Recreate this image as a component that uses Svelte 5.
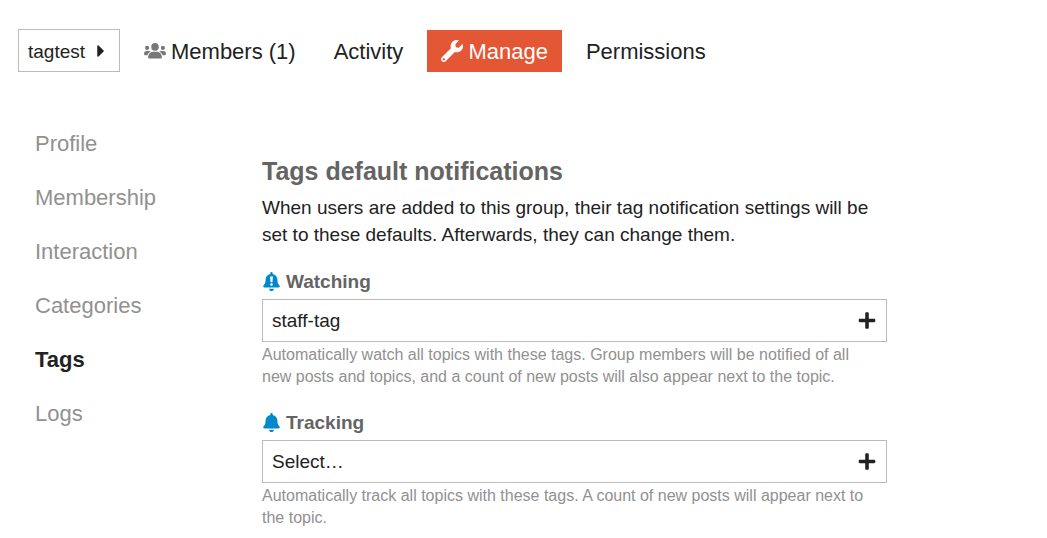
<script>
	let group = 'tagtest';

	const sections = ['Profile', 'Membership', 'Interaction', 'Categories', 'Tags', 'Logs'];
	const activeSection = 'Tags';

	const tabs = [
		{ name: 'Members (1)', icon: 'users' },
		{ name: 'Activity' },
		{ name: 'Manage', icon: 'wrench', active: true },
		{ name: 'Permissions' }
	];

	const levels = [
		{
			id: 'watching',
			label: 'Watching',
			icon: 'bell-exclamation',
			value: 'staff-tag',
			help: 'Automatically watch all topics with these tags. Group members will be notified of all new posts and topics, and a count of new posts will also appear next to the topic.'
		},
		{
			id: 'tracking',
			label: 'Tracking',
			icon: 'bell',
			value: 'Select…',
			help: 'Automatically track all topics with these tags. A count of new posts will appear next to the topic.'
		}
	];

	const bell =
		'M224 512c35.32 0 63.97-28.65 63.97-64H160.03c0 35.35 28.65 64 63.97 64zm215.39-149.71c-19.32-20.76-55.47-51.99-55.47-154.29 0-77.7-54.48-139.9-127.94-155.16V32c0-17.67-14.32-32-31.98-32s-31.98 14.33-31.98 32v20.84C118.56 68.1 64.08 130.3 64.08 208c0 102.3-36.15 133.53-55.47 154.29-6 6.45-8.66 14.16-8.61 21.71.11 16.4 12.98 32 32.1 32h383.8c19.12 0 32-15.6 32.1-32 .05-7.55-2.61-15.27-8.61-21.71z';
</script>

<div class="page">
	<nav class="tabs" aria-label="Group">
		<div class="picker group-picker">
			<select aria-label="Group" bind:value={group}>
				<option>tagtest</option>
			</select>
			<svg class="caret" viewBox="0 0 192 512" aria-hidden="true">
				<path d="M0 384.662V127.338c0-17.818 21.543-26.741 34.142-14.142l128.657 128.657c7.81 7.81 7.81 20.474 0 28.284L34.142 398.804C21.543 411.404 0 402.48 0 384.662z" />
			</svg>
		</div>
		{#each tabs as tab}
			<a href="#{tab.name}" class:active={tab.active}>
				{#if tab.icon === 'users'}
					<svg class="users" viewBox="0 0 64 46" aria-hidden="true">
						<circle cx="32" cy="11" r="11" />
						<circle cx="9" cy="14" r="6" />
						<circle cx="55" cy="14" r="6" />
						<path d="M12 42c0-10 6-17 15-17h10c9 0 15 7 15 17 0 2-1 3-3 3H15c-2 0-3-1-3-3z" />
						<path d="M0 32c0-6 3-9 8-9h6c2 0 4 1 5 2-5 3-8 6-9 10H3c-2 0-3-1-3-3z" />
						<path d="M64 32c0-6-3-9-8-9h-6c-2 0-4 1-5 2 5 3 8 6 9 10h7c2 0 3-1 3-3z" />
					</svg>
				{:else if tab.icon === 'wrench'}
					<svg class="wrench" viewBox="0 0 512 512" aria-hidden="true">
						<path d="M507.73 109.1c-2.24-9.03-13.54-12.09-20.12-5.51l-74.36 74.36-67.88-11.31-11.31-67.88 74.36-74.36c6.62-6.62 3.43-17.9-5.66-20.16-47.38-11.74-99.55.91-136.58 37.93-39.64 39.64-50.55 97.1-34.05 147.2L20 404c-25 25-25 63 0 88s63 25 88 0l214.45-211.95c50.12 16.71 107.47 5.68 147.37-34.22 37.07-37.07 49.7-89.32 37.91-136.73zM64 476c-15 0-27-12-27-27s12-27 27-27 27 12 27 27-12 27-27 27z" />
					</svg>
				{/if}
				{tab.name}
			</a>
		{/each}
	</nav>

	<div class="body">
		<nav class="sections" aria-label="Manage">
			{#each sections as section}
				<a href="#{section}" class:active={section === activeSection}>{section}</a>
			{/each}
		</nav>

		<main>
			<h1>Tags default notifications</h1>
			<p class="intro">
				When users are added to this group, their tag notification settings will be set to these
				defaults. Afterwards, they can change them.
			</p>

			{#each levels as level}
				<section class="level">
					<label for={level.id}>
						<svg class="bell" viewBox="0 0 448 512" aria-hidden="true">
							<path d={bell} />
							{#if level.icon === 'bell-exclamation'}
								<path class="mark" d="M186 120h76l-12 156h-52z" />
								<circle class="mark" cx="224" cy="336" r="34" />
							{/if}
						</svg>
						{level.label}
					</label>
					<div class="picker">
						<select id={level.id} bind:value={level.value}>
							<option>{level.value}</option>
						</select>
						<svg class="plus" viewBox="0 0 448 512" aria-hidden="true">
							<path d="M416 208H272V64c0-17.67-14.33-32-32-32h-32c-17.67 0-32 14.33-32 32v144H32c-17.67 0-32 14.33-32 32v32c0 17.67 14.33 32 32 32h144v144c0 17.67 14.33 32 32 32h32c17.67 0 32-14.33 32-32V304h144c17.67 0 32-14.33 32-32v-32c0-17.67-14.33-32-32-32z" />
						</svg>
					</div>
					<p class="help">{level.help}</p>
				</section>
			{/each}
		</main>
	</div>
</div>

<style>
	:global(body) {
		background: #fff;
	}

	.page {
		padding: 29px 18px 10px;
		color: #222;
		font-family: 'Liberation Sans', Arial, sans-serif;
		font-size: 19px;
		line-height: 27px;
	}

	h1,
	p {
		margin: 0;
	}

	a {
		text-decoration: none;
	}

	svg {
		flex-shrink: 0;
		fill: currentColor;
	}

	.tabs {
		display: flex;
		align-items: flex-end;
		gap: 10px;
	}

	.tabs a {
		display: flex;
		align-items: center;
		gap: 5px;
		height: 42px;
		padding: 0 14px;
		color: #222;
		font-size: 22px;
		white-space: nowrap;
	}

	.tabs a.active {
		background: #e45735;
		color: #fff;
	}

	.users {
		width: 22px;
		height: 16px;
		color: #777;
	}

	.wrench {
		width: 22px;
		height: 22px;
	}

	.picker {
		display: grid;
		align-items: center;
	}

	.picker > * {
		grid-area: 1 / 1;
	}

	.picker svg {
		justify-self: end;
		margin-right: 11px;
		pointer-events: none;
	}

	select {
		appearance: none;
		width: 100%;
		height: 43px;
		padding: 0 40px 0 9px;
		border: 1px solid #bbb;
		border-radius: 0;
		background: #fff;
		color: #222;
		font: inherit;
	}

	.group-picker select {
		padding-top: 2px;
		padding-right: 33px;
	}

	.group-picker .caret {
		width: 8px;
		height: 20px;
		margin-right: 15px;
	}

	.plus {
		width: 18px;
		height: 19px;
	}

	.body {
		display: flex;
		align-items: flex-start;
		margin-top: 45px;
	}

	.sections {
		display: flex;
		flex: 0 0 244px;
		flex-direction: column;
	}

	.sections a {
		padding: 0 17px;
		color: #919191;
		font-size: 22px;
		line-height: 54px;
	}

	.sections a.active {
		color: #222;
		font-weight: bold;
	}

	main {
		flex: 0 1 625px;
		min-width: 0;
		padding-top: 39px;
	}

	h1 {
		color: #646464;
		font-size: 25px;
		line-height: 30px;
	}

	.intro {
		margin-top: 8px;
	}

	.level {
		margin-top: 20px;
	}

	label {
		display: flex;
		align-items: center;
		gap: 5px;
		margin-bottom: 4px;
		color: #646464;
		font-weight: bold;
	}

	.bell {
		width: 19px;
		height: 19px;
		color: #08c;
	}

	.mark {
		fill: #fff;
	}

	.help {
		padding: 2px 8px 1px 0;
		color: #919191;
		font-size: 16px;
		line-height: 22px;
	}
</style>
